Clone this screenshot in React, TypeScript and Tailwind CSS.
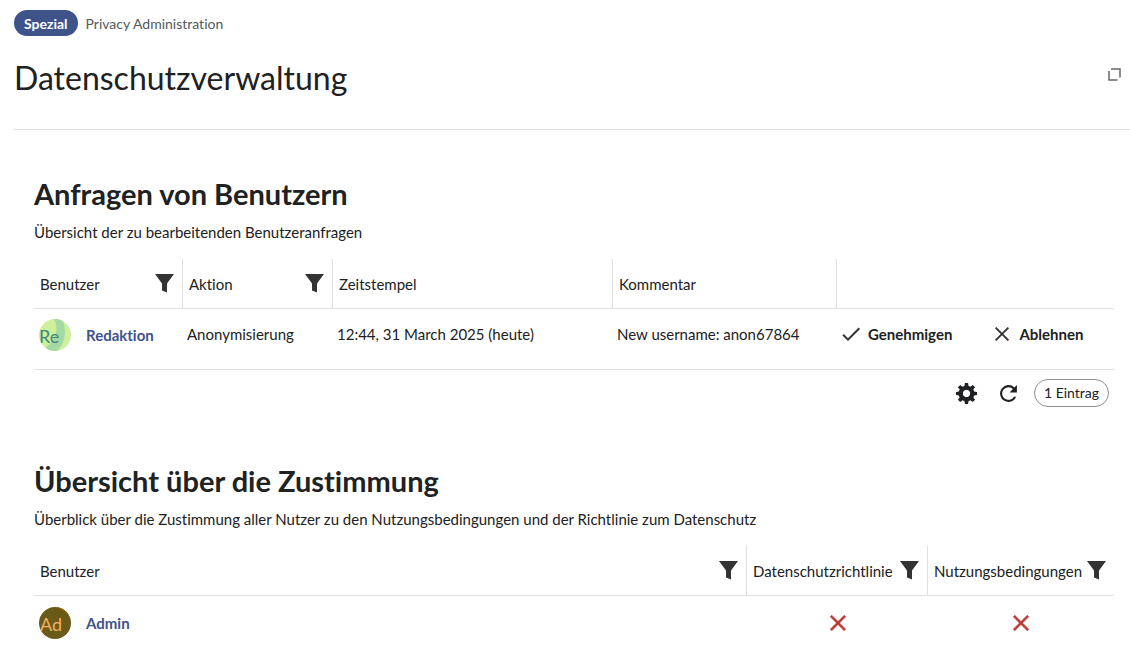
import type { ReactNode } from "react";

const FilterIcon = () => (
  <svg viewBox="0 0 19 19" className="w-[19px] h-[19px] fill-[#333]" aria-hidden="true">
    <path d="M0 0H19L12 9.5V18.6L7 16.6V9.5Z" />
  </svg>
);

const CheckIcon = () => (
  <svg viewBox="0 0 20 20" className="w-5 h-5 fill-[#333]" aria-hidden="true">
    <path d="M7 14.17 2.83 10l-1.41 1.41L7 17 19 5l-1.41-1.42z" />
  </svg>
);

const CloseIcon = ({ className }: { className: string }) => (
  <svg viewBox="0 0 20 20" className={className} aria-hidden="true">
    <path d="m4.34 2.93 12.73 12.73-1.41 1.41L2.93 4.35z" />
    <path d="M17.07 4.34 4.34 17.07l-1.41-1.41L15.66 2.93z" />
  </svg>
);

const SettingsIcon = () => (
  <svg viewBox="0 0 20 20" className="w-[21px] h-[21px] fill-[#202122]" aria-hidden="true">
    <g transform="translate(10 10)">
      {[0, 45, 90, 135].map((angle) => (
        <path key={angle} transform={`rotate(${angle})`} d="M1.5-10h-3l-1 6.5h5m0 7h-5l1 6.5h3" />
      ))}
    </g>
    <path d="M10 2.5a7.5 7.5 0 0 0 0 15 7.5 7.5 0 0 0 0-15v4a3.5 3.5 0 0 1 0 7 3.5 3.5 0 0 1 0-7" />
  </svg>
);

const ReloadIcon = () => (
  <svg viewBox="0 0 20 20" className="w-[21px] h-[21px] fill-[#202122]" aria-hidden="true">
    <path d="M15.65 4.35A8 8 0 1 0 17.4 13h-2.22a6 6 0 1 1-1-7.22L11 9h7V2z" />
  </svg>
);

const ExpandIcon = () => (
  <svg viewBox="0 0 13 13" className="w-[13px] h-[13px]" fill="none" stroke="#6b6668" strokeWidth="1.5" aria-hidden="true">
    <path d="M3 1H12V9.5" />
    <path d="M1 3V12H9.5" />
  </svg>
);

const RedaktionAvatar = () => (
  <svg viewBox="0 0 32 32" className="w-8 h-8 rounded-full shrink-0" aria-hidden="true">
    <rect width="32" height="32" fill="#cdf09a" />
    <path d="M15 0C20 8 18 21 6 29L10 32H18C27 24 28 9 23 0Z" fill="#a5d9a3" />
    <text x="0" y="24" fontSize="18" fontFamily="Lato, sans-serif" fill="#3d8583">Re</text>
  </svg>
);

const AdminAvatar = () => (
  <svg viewBox="0 0 32 32" className="w-8 h-8 rounded-full shrink-0" aria-hidden="true">
    <rect width="32" height="32" fill="#6a5a17" />
    <path d="M18 0L32 9V0Z" fill="#8f5c08" />
    <text x="1" y="24" fontSize="18" fontFamily="Lato, sans-serif" fill="#f4b063">Ad</text>
  </svg>
);

const HeadCell = ({ label, filter, last }: { label?: string; filter?: boolean; last?: boolean }) => (
  <th
    scope="col"
    className={`h-[50px] p-0 pl-1.5 pr-2 text-left font-normal border-b border-[#dfdfdf] ${last ? "" : "border-r"}`}
  >
    <div className="flex items-center justify-between">
      <span>{label}</span>
      {filter && (
        <button type="button" aria-label={`${label} filtern`}>
          <FilterIcon />
        </button>
      )}
    </div>
  </th>
);

const UserCell = ({ name, avatar }: { name: string; avatar: ReactNode }) => (
  <div className="flex items-center gap-[15px] pl-[5px]">
    {avatar}
    <a href="#" className="font-bold text-[#3e5389]">{name}</a>
  </div>
);

const Section = ({ title, text, children }: { title: string; text: string; children: ReactNode }) => (
  <section>
    <h2 className="text-[29px] leading-9 font-bold">{title}</h2>
    <p className="mt-2.5 mb-[17px] leading-5">{text}</p>
    {children}
  </section>
);

const App = () => {
  return (
    <div className="min-h-screen bg-white text-[15px] leading-5 text-[#202122] font-[Lato,sans-serif] [font-variant-ligatures:none]">
      <header className="ml-3.5 pt-2.5 border-b border-[#dfdfdf]">
        <div className="flex items-center gap-2 text-sm">
          <span className="h-[26px] px-2.5 pt-0.5 flex items-center rounded-full bg-[#3e5389] font-bold text-white">
            Spezial
          </span>
          <span className="pt-0.5 text-[#54595d]">Privacy Administration</span>
        </div>
        <div className="flex items-start justify-between pt-5 pb-[30px] pr-[9px]">
          <h1 className="text-[32px] leading-[43px]">Datenschutzverwaltung</h1>
          <button type="button" aria-label="Vollbild" className="mt-3">
            <ExpandIcon />
          </button>
        </div>
      </header>

      <main className="pl-[34px] pr-4 pt-[46px]">
        <Section title="Anfragen von Benutzern" text="Übersicht der zu bearbeitenden Benutzeranfragen">
          <table className="w-full table-fixed border-separate border-spacing-0">
            <colgroup>
              <col className="w-[149px]" />
              <col className="w-[150px]" />
              <col />
              <col className="w-[224px]" />
              <col className="w-[277px]" />
            </colgroup>
            <thead>
              <tr>
                <HeadCell label="Benutzer" filter />
                <HeadCell label="Aktion" filter />
                <HeadCell label="Zeitstempel" />
                <HeadCell label="Kommentar" />
                <HeadCell last />
              </tr>
            </thead>
            <tbody>
              <tr className="[&>td]:h-[61px] [&>td]:border-b [&>td]:border-[#dfdfdf]">
                <td className="pb-2">
                  <UserCell name="Redaktion" avatar={<RedaktionAvatar />} />
                </td>
                <td className="pl-1 pb-2.5">Anonymisierung</td>
                <td className="pl-1 pb-2.5">12:44, 31 March 2025 (heute)</td>
                <td className="pl-1 pb-2.5">New username: anon67864</td>
                <td className="pl-1 pb-2.5">
                  <div className="flex items-center gap-10 font-bold">
                    <button type="button" className="flex items-center gap-[7px]">
                      <CheckIcon />
                      Genehmigen
                    </button>
                    <button type="button" className="flex items-center gap-[7px]">
                      <CloseIcon className="w-5 h-5 fill-[#333]" />
                      Ablehnen
                    </button>
                  </div>
                </td>
              </tr>
            </tbody>
          </table>
          <div className="flex items-center justify-end pt-[9px] pr-[5px]">
            <button type="button" aria-label="Einstellungen" className="mr-[21px]">
              <SettingsIcon />
            </button>
            <button type="button" aria-label="Aktualisieren" className="mr-[15px]">
              <ReloadIcon />
            </button>
            <span className="h-7 px-[9px] flex items-center rounded-full border border-[#8f8f8f] text-sm">1 Eintrag</span>
          </div>
        </Section>

        <div className="mt-14">
          <Section
            title="Übersicht über die Zustimmung"
            text="Überblick über die Zustimmung aller Nutzer zu den Nutzungsbedingungen und der Richtlinie zum Datenschutz"
          >
            <table className="w-full table-fixed border-separate border-spacing-0">
              <colgroup>
                <col />
                <col className="w-[181px]" />
                <col className="w-[186px]" />
              </colgroup>
              <thead>
                <tr>
                  <HeadCell label="Benutzer" filter />
                  <HeadCell label="Datenschutzrichtlinie" filter />
                  <HeadCell label="Nutzungsbedingungen" filter last />
                </tr>
              </thead>
              <tbody>
                <tr className="[&>td]:h-[53px] [&>td]:p-0">
                  <td>
                    <UserCell name="Admin" avatar={<AdminAvatar />} />
                  </td>
                  <td>
                    <CloseIcon className="mx-auto w-[22px] h-[22px] fill-[#b93a36] stroke-[#b93a36] [stroke-width:0.5]" />
                  </td>
                  <td>
                    <CloseIcon className="mx-auto w-[22px] h-[22px] fill-[#b93a36] stroke-[#b93a36] [stroke-width:0.5]" />
                  </td>
                </tr>
              </tbody>
            </table>
          </Section>
        </div>
      </main>
    </div>
  );
};

export default App;
